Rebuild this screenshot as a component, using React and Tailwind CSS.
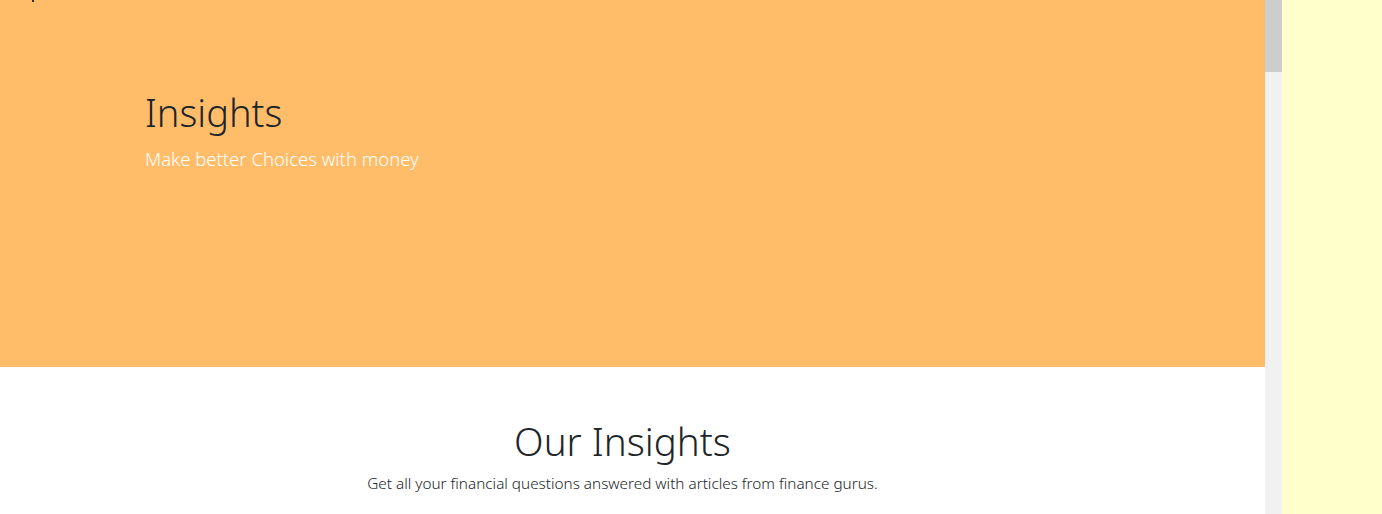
export default function App() {
  return (
    <div className="flex h-[514px] w-[1382px] overflow-hidden" style={{ fontFamily: '"Noto Sans", "Open Sans", sans-serif' }}>
      <div className="relative w-[1265px] shrink-0 overflow-hidden bg-white">
        <div className="absolute left-[32px] top-0 h-[2px] w-[2px] bg-[#3a2e22]" />
        <section className="h-[367px] bg-[#ffbd69] pl-[145px] pt-[88px]">
          <h1 className="text-[38px] font-light leading-[48px] text-[#212529]">Insights</h1>
          <p className="mt-[8px] text-[18.5px] font-light leading-[30px] text-white">Make better Choices with money</p>
        </section>
        <section className="flex flex-col items-center pr-[20px] pt-[50px]">
          <h2 className="text-[38.5px] font-light leading-[48px] text-[#212529]">Our Insights</h2>
          <p className="mt-[6px] text-[15.3px] font-light leading-[24px] text-[#212529]">Get all your financial questions answered with articles from finance gurus.</p>
        </section>
      </div>
      <div className="flex w-[17px] shrink-0 flex-col bg-[#f1f1f1]">
        <div className="h-[72px] w-full bg-[#cdcdcd]" />
      </div>
      <div className="flex-1 bg-[#ffffcc]" />
    </div>
  );
}
